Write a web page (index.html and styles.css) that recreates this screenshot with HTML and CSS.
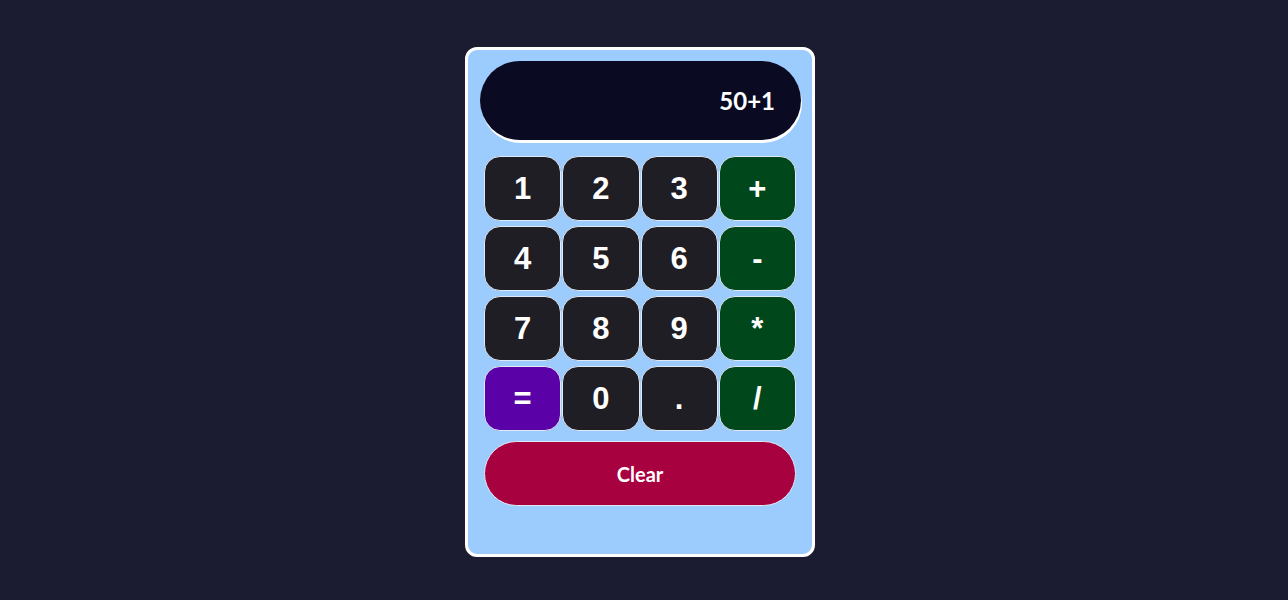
FILE: index.html
```html
<!DOCTYPE html>
<html>
<head>
<meta charset="utf-8">
<link rel="stylesheet" href="styles.css">
</head>
<body>
<main class="calc">
  <div class="display">50+1</div>
  <div class="keys">
    <button class="key num">1</button>
    <button class="key num">2</button>
    <button class="key num">3</button>
    <button class="key op">+</button>
    <button class="key num">4</button>
    <button class="key num">5</button>
    <button class="key num">6</button>
    <button class="key op">-</button>
    <button class="key num">7</button>
    <button class="key num">8</button>
    <button class="key num">9</button>
    <button class="key op">*</button>
    <button class="key eq">=</button>
    <button class="key num">0</button>
    <button class="key num">.</button>
    <button class="key op">/</button>
  </div>
  <button class="clear">Clear</button>
</main>
</body>
</html>
```
FILE: styles.css
```css
html, body {
  margin: 0;
  padding: 0;
}
body {
  background: #1b1b32;
  min-height: 100vh;
  display: flex;
  align-items: center;
  justify-content: center;
  padding: 4px 8px 0 0;
  box-sizing: border-box;
  font-family: "Lato", "Liberation Sans", sans-serif;
}
.calc {
  width: 350px;
  height: 510px;
  box-sizing: border-box;
  background: #9ccbfd;
  border: 3px solid #ffffff;
  border-radius: 12px;
  padding: 11px 11px 0 12px;
  display: flex;
  flex-direction: column;
}
.display {
  height: 79px;
  background: #0a0a23;
  border-radius: 40px;
  box-shadow: 1px 3px 0 #ffffff;
  color: #ffffff;
  font-family: "Lato", sans-serif;
  font-weight: 700;
  font-size: 24px;
  display: flex;
  align-items: center;
  justify-content: flex-end;
  padding-right: 26px;
}
.keys {
  margin: 16px 5px 0 4px;
  display: grid;
  grid-template-columns: repeat(4, 1fr);
  column-gap: 1px;
  row-gap: 5px;
}
.key {
  height: 65px;
  border: 1px solid #dfe9f5;
  border-radius: 16px;
  color: #ffffff;
  font-family: "Liberation Sans", Arial, sans-serif;
  font-weight: 700;
  font-size: 31px;
  padding: 0;
  margin: 0;
}
.num { background: #1f1e24; }
.op { background: #00471b; }
.eq { background: #5a01a7; }
.clear {
  margin: 10px 5px 0 4px;
  height: 65px;
  border: 1px solid #dfe9f5;
  border-radius: 33px;
  background: #a8013f;
  color: #ffffff;
  font-family: "Lato", sans-serif;
  font-weight: 700;
  font-size: 20px;
  padding: 0;
}
```
